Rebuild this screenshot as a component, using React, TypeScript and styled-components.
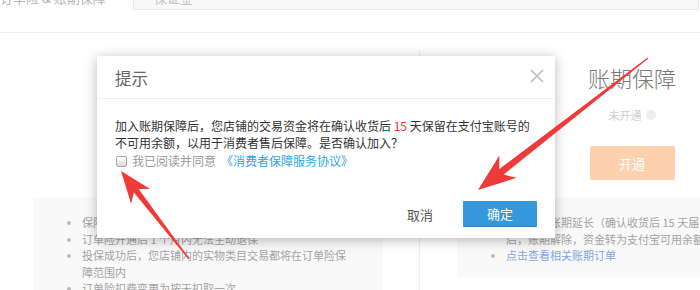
import React from 'react';
import styled, { createGlobalStyle } from 'styled-components';

const GlobalStyle = createGlobalStyle`
  html, body {
    margin: 0;
    padding: 0;
    width: 700px;
    height: 290px;
    overflow: hidden;
    background: #fff;
    font-family: 'Noto Sans CJK SC', 'Noto Sans', sans-serif;
  }
`;

type Point = [number, number];

const arrowPoints = (
  tail: Point,
  tip: Point,
  headLen: number,
  headHalf: number,
  shaftHalf: number
) => {
  const dx = tip[0] - tail[0];
  const dy = tip[1] - tail[1];
  const len = Math.sqrt(dx * dx + dy * dy);
  const ux = dx / len;
  const uy = dy / len;
  const nx = -uy;
  const ny = ux;
  const b: Point = [tip[0] - ux * headLen, tip[1] - uy * headLen];
  const j: Point = [tip[0] - ux * headLen * 0.78, tip[1] - uy * headLen * 0.78];
  const pts: Point[] = [
    tip,
    [b[0] + nx * headHalf, b[1] + ny * headHalf],
    [j[0] + nx * shaftHalf, j[1] + ny * shaftHalf],
    [tail[0] + nx * 0.6, tail[1] + ny * 0.6],
    [tail[0] - nx * 0.6, tail[1] - ny * 0.6],
    [j[0] - nx * shaftHalf, j[1] - ny * shaftHalf],
    [b[0] - nx * headHalf, b[1] - ny * headHalf],
  ];
  return pts.map((p) => `${p[0].toFixed(1)},${p[1].toFixed(1)}`).join(' ');
};

interface CardProps {
  title?: string;
  items: React.ReactNode[];
}

const ServiceCard: React.FC<CardProps> = ({ title, items }) => (
  <StyledCard>
    <StyledCardTitle>{title}</StyledCardTitle>
    <StyledStatus>
      未开通
      <StyledStatusDot />
    </StyledStatus>
    <StyledOpenButton>开通</StyledOpenButton>
    <StyledPanel>
      <ul>
        {items.map((item, i) => (
          <li key={i}>{item}</li>
        ))}
      </ul>
    </StyledPanel>
  </StyledCard>
);

const App: React.FC = () => {
  return (
    <>
      <GlobalStyle />
      <StyledPage>
        <StyledTopBar>
          <StyledTabs>
            <StyledCrumb>订单险 &amp; 账期保障</StyledCrumb>
            <StyledTabBox>保证金</StyledTabBox>
          </StyledTabs>
        </StyledTopBar>
        <StyledMain>
          <StyledLeftColumn>
            {/* the title of this card sits under the dialog */}
            <ServiceCard
              items={[
                '保险期限为一年，到期后自动续保',
                '订单险开通后 1 个月内无法主动退保',
                '投保成功后，您店铺内的实物类目交易都将在订单险保障范围内',
                '订单险扣费变更为按天扣取一次',
              ]}
            />
          </StyledLeftColumn>
          <StyledRightColumn>
            <ServiceCard
              title="账期保障"
              items={[
                <>
                  开通后，账期延长（确认收货后 15 天届满且交易完成
                  <br />
                  后，账期解除，资金转为支付宝可用余额）
                </>,
                <StyledPanelLink href="#">点击查看相关账期订单</StyledPanelLink>,
              ]}
            />
          </StyledRightColumn>
        </StyledMain>

        <StyledModal>
          <StyledModalHeader>
            <StyledModalTitle>提示</StyledModalTitle>
            <StyledClose aria-label="关闭">
              <svg width="14" height="14" viewBox="0 0 14 14">
                <path d="M1 1 L13 13 M13 1 L1 13" stroke="#bdbdbd" strokeWidth="1.6" />
              </svg>
            </StyledClose>
          </StyledModalHeader>
          <StyledModalBody>
            <StyledMessage>
              加入账期保障后，您店铺的交易资金将在确认收货后 <StyledRed>15</StyledRed>{' '}
              天保留在支付宝账号的不可用余额，以用于消费者售后保障。是否确认加入？
            </StyledMessage>
            <StyledAgreeRow>
              <StyledCheckbox />
              我已阅读并同意
              <StyledAgreeLink href="#">《消费者保障服务协议》</StyledAgreeLink>
            </StyledAgreeRow>
          </StyledModalBody>
          <StyledModalFooter>
            <StyledCancel>取消</StyledCancel>
            <StyledConfirm>确定</StyledConfirm>
          </StyledModalFooter>
        </StyledModal>

        <StyledArrows width="700" height="290" viewBox="0 0 700 290">
          <polygon points={arrowPoints([189, 259], [121, 171], 32, 12, 3)} fill="#f03a3a" />
          <polygon points={arrowPoints([648, 58], [478, 190], 38, 14, 3.5)} fill="#f03a3a" />
        </StyledArrows>
      </StyledPage>
    </>
  );
};

const StyledPage = styled.div`
  position: relative;
  width: 700px;
  height: 290px;
  overflow: hidden;
`;

const StyledTopBar = styled.div`
  display: flex;
  flex-direction: column;
  height: 32px;
  overflow: hidden;
  border-bottom: 1px solid #eeeeee;
`;

const StyledTabs = styled.div`
  display: flex;
  align-items: stretch;
  height: 24px;
  margin-top: -14px;
`;

const StyledCrumb = styled.div`
  width: 116px;
  font-size: 13px;
  line-height: 24px;
  color: #b5b5b5;
  white-space: nowrap;
`;

const StyledTabBox = styled.div`
  flex: 1;
  margin-left: 17px;
  margin-right: 1px;
  padding-left: 20px;
  background: #f8f8f8;
  border: 1px solid #e8e8e8;
  font-size: 13px;
  line-height: 22px;
  color: #c4c4c4;
`;

const StyledMain = styled.div`
  display: flex;
  padding-top: 17px;
  height: 240px;
`;

const StyledLeftColumn = styled.div`
  width: 419px;
  flex-shrink: 0;
  box-sizing: border-box;
  padding-left: 33px;
`;

const StyledRightColumn = styled.div`
  flex-shrink: 0;
  border-left: 1px solid #eeeeee;
  padding-left: 37px;
`;

const StyledCard = styled.div`
  width: 350px;
  display: flex;
  flex-direction: column;
  align-items: center;
  padding-top: 12px;
`;

const StyledCardTitle = styled.div`
  height: 30px;
  font-size: 22px;
  line-height: 30px;
  color: #7a7a7a;
  font-weight: 300;
`;

const StyledStatus = styled.div`
  display: flex;
  align-items: center;
  gap: 4px;
  margin-top: 15px;
  font-size: 11px;
  line-height: 16px;
  color: #cfcfcf;
`;

const StyledStatusDot = styled.span`
  width: 10px;
  height: 10px;
  border-radius: 50%;
  background: #eeeeee;
`;

const StyledOpenButton = styled.button`
  margin-top: 23px;
  width: 85px;
  height: 34px;
  border: 0;
  border-radius: 2px;
  background: #fdd0ae;
  color: #ffffff;
  font-family: inherit;
  font-size: 13px;
  padding: 0;
`;

const StyledPanel = styled.div`
  align-self: stretch;
  margin-top: 18px;
  background: #f9f9f9;
  padding: 16px 36px 13px 49px;

  ul {
    margin: 0;
    padding: 0;
    list-style: disc;
  }

  li {
    font-size: 11px;
    line-height: 16.6px;
    color: #a3a3a3;
  }

  li::marker {
    color: #bbbbbb;
  }
`;

const StyledPanelLink = styled.a`
  color: #86a3e6;
  text-decoration: none;
`;

const StyledModal = styled.div`
  position: absolute;
  left: 97px;
  top: 56px;
  width: 458px;
  background: #ffffff;
  box-shadow: 0 2px 12px rgba(0, 0, 0, 0.28);
`;

const StyledModalHeader = styled.div`
  display: flex;
  align-items: center;
  justify-content: space-between;
  height: 42px;
  padding: 0 11px 0 18px;
  border-bottom: 1px solid #f0f0f0;
`;

const StyledModalTitle = styled.div`
  font-size: 16.5px;
  color: #666666;
  line-height: 42px;
  margin-top: 2px;
`;

const StyledClose = styled.button`
  border: 0;
  background: none;
  padding: 0;
  width: 14px;
  height: 14px;
  display: flex;
  margin-top: -3px;
`;

const StyledModalBody = styled.div`
  padding: 19px 18px 0;
`;

const StyledMessage = styled.div`
  font-size: 12px;
  line-height: 16.5px;
  color: #333333;
`;

const StyledRed = styled.span`
  color: #ff2a2a;
`;

const StyledAgreeRow = styled.div`
  display: flex;
  align-items: center;
  margin-top: 2px;
  font-size: 12px;
  line-height: 16px;
  color: #9a9a9a;
`;

const StyledCheckbox = styled.span`
  width: 9px;
  height: 9px;
  margin: 0 5px 0 1px;
  border: 1px solid #a8a8a8;
  border-radius: 2px;
  background: linear-gradient(#ffffff, #dcdcdc);
`;

const StyledAgreeLink = styled.a`
  margin-left: 5px;
  color: #2aa6e8;
  text-decoration: none;
`;

const StyledModalFooter = styled.div`
  display: flex;
  justify-content: flex-end;
  gap: 6px;
  padding: 32px 18px 11px;
`;

const StyledCancel = styled.button`
  width: 74px;
  height: 26px;
  border: 0;
  background: none;
  padding: 0;
  font-family: inherit;
  font-size: 13px;
  color: #555555;
`;

const StyledConfirm = styled.button`
  width: 74px;
  height: 26px;
  border: 0;
  border-bottom: 1px solid #2a7fc0;
  border-radius: 1px;
  background: #3597dc;
  padding: 0;
  font-family: inherit;
  font-size: 13px;
  color: #ffffff;
`;

const StyledArrows = styled.svg`
  position: absolute;
  left: 0;
  top: 0;
  pointer-events: none;
`;

export default App;
